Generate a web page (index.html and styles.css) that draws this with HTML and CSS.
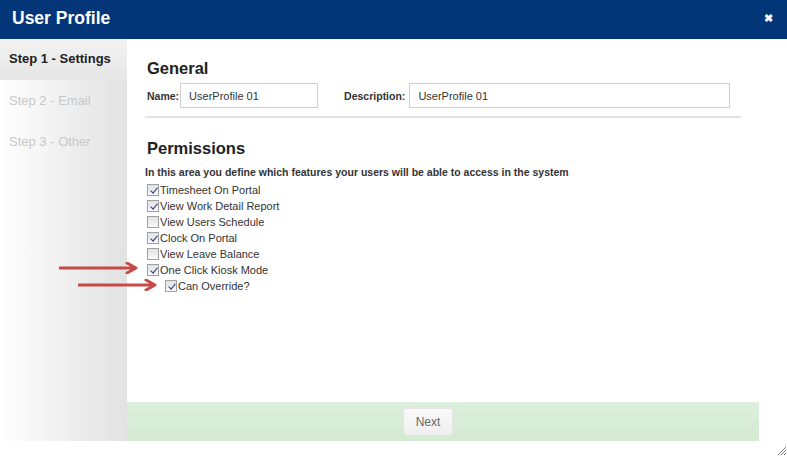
FILE: index.html
```html
<!DOCTYPE html>
<html>
<head>
<meta charset="utf-8">
<link rel="stylesheet" href="styles.css">
</head>
<body>
<div class="dialog">
  <div class="header">
    <div class="title">User Profile</div>
    <div class="close">&#x2716;</div>
  </div>
  <div class="body">
    <div class="sidebar">
      <div class="step active">Step 1 - Settings</div>
      <div class="step">Step 2 - Email</div>
      <div class="step">Step 3 - Other</div>
    </div>
    <div class="main">
      <div class="content">
        <h2 class="heading">General</h2>
        <div class="fields">
          <label class="lbl">Name:</label>
          <div class="input name-input">UserProfile 01</div>
          <label class="lbl desc-lbl">Description:</label>
          <div class="input desc-input">UserProfile 01</div>
        </div>
        <div class="rule"></div>
        <h2 class="heading perm">Permissions</h2>
        <p class="intro">In this area you define which features your users will be able to access in the system</p>
        <ul class="checks">
          <li><span class="cb on"></span>Timesheet On Portal</li>
          <li><span class="cb on"></span>View Work Detail Report</li>
          <li><span class="cb"></span>View Users Schedule</li>
          <li><span class="cb on"></span>Clock On Portal</li>
          <li><span class="cb"></span>View Leave Balance</li>
          <li><span class="cb on"></span>One Click Kiosk Mode</li>
          <li class="sub"><span class="cb on"></span>Can Override?</li>
        </ul>
      </div>
      <div class="footer">
        <button class="next">Next</button>
      </div>
    </div>
  </div>
  <div class="bottom">
    <svg class="grip" width="10" height="10" viewBox="0 0 10 10"><path d="M9 1L1 9M9 4L4 9M9 7L7 9" stroke="#777" stroke-width="1"/></svg>
  </div>
  <svg class="arrow a1" width="80" height="12" viewBox="0 0 80 12"><path d="M1 6H76M68 1L77 6L68 11" fill="none" stroke="#c64a48" stroke-width="3" stroke-linejoin="round" stroke-linecap="round"/></svg>
  <svg class="arrow a2" width="80" height="12" viewBox="0 0 80 12"><path d="M1 6H76M68 1L77 6L68 11" fill="none" stroke="#c64a48" stroke-width="3" stroke-linejoin="round" stroke-linecap="round"/></svg>
</div>
</body>
</html>
```
FILE: styles.css
```css
* { box-sizing: border-box; }
html, body { margin: 0; padding: 0; }
body {
  width: 787px;
  height: 457px;
  overflow: hidden;
  background: #fff;
  font-family: "Liberation Sans", Arial, sans-serif;
  color: #333;
}
.dialog { position: relative; width: 787px; height: 457px; display: flex; flex-direction: column; }
.header {
  height: 39px;
  background: #023679;
  display: flex;
  align-items: center;
  justify-content: space-between;
  padding: 0 14px 0 12px;
}
.title { color: #fff; font-size: 17.5px; font-weight: bold; margin-top: -3px; }
.close { color: #fff; font-size: 11px; font-weight: bold; margin-top: -2px; }
.body { display: flex; height: 402px; }
.sidebar {
  width: 127px;
  flex: none;
  background: linear-gradient(to right, #ffffff 0%, #f0f0f0 50%, #e2e2e2 100%);
}
.step {
  height: 41px;
  padding-left: 9px;
  display: flex;
  align-items: center;
  font-size: 13px;
  color: #c8c8c8;
}
.step.active {
  color: #222;
  font-weight: bold;
  background: linear-gradient(to bottom, #f2f2f2, #e6e6e6);
  padding-bottom: 2px;
}
.step:nth-child(2) { padding-bottom: 1px; }
.main { flex: 1; display: flex; flex-direction: column; }
.content { flex: 1; padding: 17px 0 0 18px; }
.heading { margin: 0 0 0 2px; font-size: 16.5px; font-weight: bold; color: #222; height: 24px; line-height: 24px; }
.fields { display: flex; align-items: center; margin-top: 3px; padding-left: 2px; }
.lbl { font-size: 10.5px; font-weight: bold; color: #333; }
.input {
  height: 25px;
  border: 1px solid #cfcfcf;
  font-size: 11px;
  padding-left: 8px;
  display: flex;
  align-items: center;
  color: #333;
}
.name-input { width: 138px; margin-left: 1px; }
.desc-lbl { margin-left: 26px; }
.desc-input { width: 321px; margin-left: 4px; }
.rule { width: 596px; height: 2px; background: #e2e2e2; margin-top: 8px; }
.perm { margin-top: 18px; }
.intro { margin: 6px 0 0 0; font-size: 10.5px; font-weight: bold; color: #333; }
.checks { list-style: none; margin: 4px 0 0 2px; padding: 0; }
.checks li { height: 16px; display: flex; align-items: center; font-size: 11px; color: #333; }
.checks li.sub { padding-left: 18px; }
.cb {
  width: 12px; height: 12px;
  border: 1px solid #a0a0a0;
  background: linear-gradient(#e2e2e2, #f8f8f8);
  margin-right: 1px;
  position: relative;
}
.cb.on::after {
  content: "";
  position: absolute;
  left: 3.5px; top: 1px;
  width: 2.5px; height: 6px;
  border: solid #2a3f8a;
  border-width: 0 1.5px 1.5px 0;
  transform: rotate(40deg);
}
.footer {
  height: 39px;
  margin-right: 28px;
  background: linear-gradient(#dcefdc, #d4ead2);
  display: flex;
  align-items: center;
  padding-left: 276px;
}
.next {
  width: 50px; height: 28px;
  border: 1px solid #e4e4e4;
  border-radius: 3px;
  background: linear-gradient(#fbfbfb, #eeeeee);
  font-family: "Liberation Sans", Arial, sans-serif;
  font-size: 12px;
  color: #666;
  padding: 0;
}
.bottom { height: 16px; display: flex; justify-content: flex-end; align-items: flex-end; }
.grip { display: block; margin-bottom: 1px; }
.arrow { position: absolute; }
.a1 { left: 59px; top: 262px; }
.a2 { left: 78px; top: 279px; }
```
